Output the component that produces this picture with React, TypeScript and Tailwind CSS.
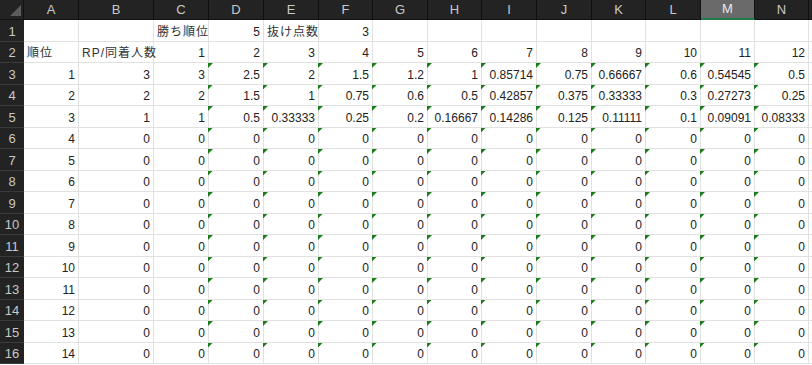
import React from "react";

const cols = ["A", "B", "C", "D", "E", "F", "G", "H", "I", "J", "K", "L", "M", "N"];

const r3 = ["3", "2.5", "2", "1.5", "1.2", "1", "0.85714", "0.75", "0.66667", "0.6", "0.54545", "0.5"];
const r4 = ["2", "1.5", "1", "0.75", "0.6", "0.5", "0.42857", "0.375", "0.33333", "0.3", "0.27273", "0.25"];
const r5 = ["1", "0.5", "0.33333", "0.25", "0.2", "0.16667", "0.14286", "0.125", "0.11111", "0.1", "0.09091", "0.08333"];
const zeros = Array(12).fill("0");

type Cell = { v: string; text?: boolean; flag?: boolean };

function buildRows(): Cell[][] {
  const rows: Cell[][] = [];
  const row1: Cell[] = Array.from({ length: 14 }, () => ({ v: "" }));
  row1[2] = { v: "勝ち順位", text: true };
  row1[3] = { v: "5" };
  row1[4] = { v: "抜け点数", text: true };
  row1[5] = { v: "3" };
  rows.push(row1);

  const row2: Cell[] = [{ v: "順位", text: true }, { v: "RP/同着人数", text: true }];
  for (let i = 1; i <= 12; i++) row2.push({ v: String(i) });
  rows.push(row2);

  for (let n = 1; n <= 14; n++) {
    const vals = n === 1 ? r3 : n === 2 ? r4 : n === 3 ? r5 : zeros;
    const b = n <= 3 ? String(4 - n) : "0";
    const row: Cell[] = [{ v: String(n) }, { v: b }];
    vals.forEach((v, i) => row.push({ v, flag: i > 0 }));
    rows.push(row);
  }
  return rows;
}

const rows = buildRows();

export default function App() {
  return (
    <div className="w-[812px] h-[365px] overflow-hidden bg-white font-['Liberation_Sans','Noto_Sans_CJK_JP',sans-serif]">
      <div className="grid grid-cols-[24px_55px_75px_55px_55px_55px_54px_55px_54px_55px_55px_54px_55px_54px_54px_1fr] grid-rows-[20px_repeat(16,21.5px)]">
        {/* corner */}
        <div className="relative bg-[#232323] border-r border-b border-[#111]">
          <div className="absolute right-[2px] bottom-[3px] w-[11px] h-[11px] bg-[#5c5c5c] [clip-path:polygon(100%_0,100%_100%,0_100%)]" />
        </div>
        {cols.map((c) => (
          <div
            key={c}
            className={
              c === "M"
                ? "flex items-center justify-center bg-[#6a6a6a] border-r border-[#111] border-b-2 border-b-[#1f7a45] text-[13px] text-[#e8e8e8]"
                : "flex items-center justify-center bg-[#232323] border-r border-b border-[#111] text-[13px] text-[#c9c9c9]"
            }
          >
            {c}
          </div>
        ))}
        <div className="bg-[#232323] border-b border-[#111]" />

        {rows.map((row, ri) => (
          <React.Fragment key={ri}>
            <div className="flex items-center justify-center pt-[2px] bg-[#232323] border-b border-[#3a3a3a] text-[13px] text-[#c9c9c9]">
              {ri + 1}
            </div>
            {row.map((cell, ci) => (
              <div
                key={ci}
                className={
                  "relative flex items-center pt-[3px] border-r border-b border-[#e1e1e1] text-[12px] whitespace-nowrap " +
                  (cell.text
                    ? "justify-start pl-[3px] tracking-[1px] text-[#333] overflow-visible z-10"
                    : "justify-end pr-[3px] text-[#222]")
                }
              >
                {cell.flag && (
                  <div className="absolute left-[-1px] top-0 w-[5px] h-[5px] bg-[#1a7d1a] [clip-path:polygon(0_0,100%_0,0_100%)]" />
                )}
                {cell.v}
              </div>
            ))}
            <div className="border-b border-[#e1e1e1]" />
          </React.Fragment>
        ))}
      </div>
    </div>
  );
}
